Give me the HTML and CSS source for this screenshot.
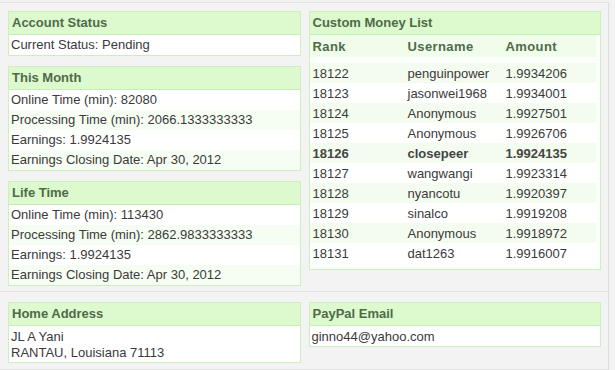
FILE: index.html
```html
<!DOCTYPE html>
<html>

<head>
    <meta charset="UTF-8">
    <title>Account</title>
    <link rel="stylesheet" href="styles.css">
</head>

<body>
    <div class="wrap">
        <div class="section top">
            <div class="col">
                <div class="panel">
                    <div class="panel-head">Account Status</div>
                    <div class="row">Current Status: Pending</div>
                </div>

                <div class="panel">
                    <div class="panel-head">This Month</div>
                    <div class="row">Online Time (min): 82080</div>
                    <div class="row alt">Processing Time (min): 2066.1333333333</div>
                    <div class="row">Earnings: 1.9924135</div>
                    <div class="row alt">Earnings Closing Date: Apr 30, 2012</div>
                </div>

                <div class="panel">
                    <div class="panel-head">Life Time</div>
                    <div class="row">Online Time (min): 113430</div>
                    <div class="row alt">Processing Time (min): 2862.9833333333</div>
                    <div class="row">Earnings: 1.9924135</div>
                    <div class="row alt">Earnings Closing Date: Apr 30, 2012</div>
                </div>
            </div>

            <div class="col">
                <div class="panel list">
                    <div class="panel-head">Custom Money List</div>
                    <table>
                        <thead>
                            <tr>
                                <th class="c-rank">Rank</th>
                                <th class="c-user">Username</th>
                                <th>Amount</th>
                            </tr>
                        </thead>
                        <tbody>
                            <tr class="alt"><td>18122</td><td>penguinpower</td><td>1.9934206</td></tr>
                            <tr><td>18123</td><td>jasonwei1968</td><td>1.9934001</td></tr>
                            <tr class="alt"><td>18124</td><td>Anonymous</td><td>1.9927501</td></tr>
                            <tr><td>18125</td><td>Anonymous</td><td>1.9926706</td></tr>
                            <tr class="alt me"><td>18126</td><td>closepeer</td><td>1.9924135</td></tr>
                            <tr><td>18127</td><td>wangwangi</td><td>1.9923314</td></tr>
                            <tr class="alt"><td>18128</td><td>nyancotu</td><td>1.9920397</td></tr>
                            <tr><td>18129</td><td>sinalco</td><td>1.9919208</td></tr>
                            <tr class="alt"><td>18130</td><td>Anonymous</td><td>1.9918972</td></tr>
                            <tr><td>18131</td><td>dat1263</td><td>1.9916007</td></tr>
                        </tbody>
                    </table>
                </div>
            </div>
        </div>

        <div class="section bottom">
            <div class="col">
                <div class="panel">
                    <div class="panel-head">Home Address</div>
                    <div class="block">
                        JL A Yani<br>
                        RANTAU, Louisiana 71113
                    </div>
                </div>
            </div>
            <div class="col">
                <div class="panel">
                    <div class="panel-head">PayPal Email</div>
                    <div class="block">ginno44@yahoo.com</div>
                </div>
            </div>
        </div>
    </div>
</body>

</html>
```

FILE: styles.css
```css
body {
    margin: 0;
    background-color: #f3f3f3;
    font-family: "Liberation Sans", Arial, sans-serif;
    font-size: 13px;
    color: #3a3a3a;
}

.wrap {
    width: 608px;
    margin-top: 2px;
    border-right: 1px solid #dedede;
}

.section {
    display: flex;
    gap: 8px;
    padding: 8px 7px 0 8px;
    border-top: 1px solid #e2e2e2;
}

.top {
    height: 280px;
}

.bottom {
    height: 67px;
    padding-top: 10px;
    border-bottom: 1px solid #e2e2e2;
}

.col {
    width: 293px;
    display: flex;
    flex-direction: column;
    gap: 10px;
}

.panel {
    border: 1px solid #cdeebf;
    background-color: #fff;
}

.panel-head {
    height: 22px;
    line-height: 22px;
    padding-left: 3px;
    background-color: #dcfacd;
    border-bottom: 1px solid #c8ecb8;
    color: #4f6a4a;
    font-weight: bold;
}

.row {
    height: 20px;
    line-height: 20px;
    padding-left: 2px;
}

.row.alt {
    background-color: #f6fdf2;
}

.block {
    padding: 3px 2px 1px;
    line-height: 16px;
}

.list {
    background-color: #fbfefa;
    padding-bottom: 6px;
}

table {
    width: 286px;
    border-collapse: collapse;
}

th {
    height: 22px;
    padding: 0 0 0 3px;
    text-align: left;
    background-color: #effdea;
    border-bottom: 1px solid #c8ecb8;
    color: #4f6a4a;
    letter-spacing: 0.4px;
}

thead tr {
    border-bottom: 6px solid #fbfefa;
}

td {
    height: 20px;
    padding: 0 0 0 3px;
    background-color: #fff;
}

tr.alt td {
    background-color: #f3fcee;
}

tr.me td {
    font-weight: bold;
    color: #444;
}

.c-rank {
    width: 92px;
}

.c-user {
    width: 95px;
}
```
